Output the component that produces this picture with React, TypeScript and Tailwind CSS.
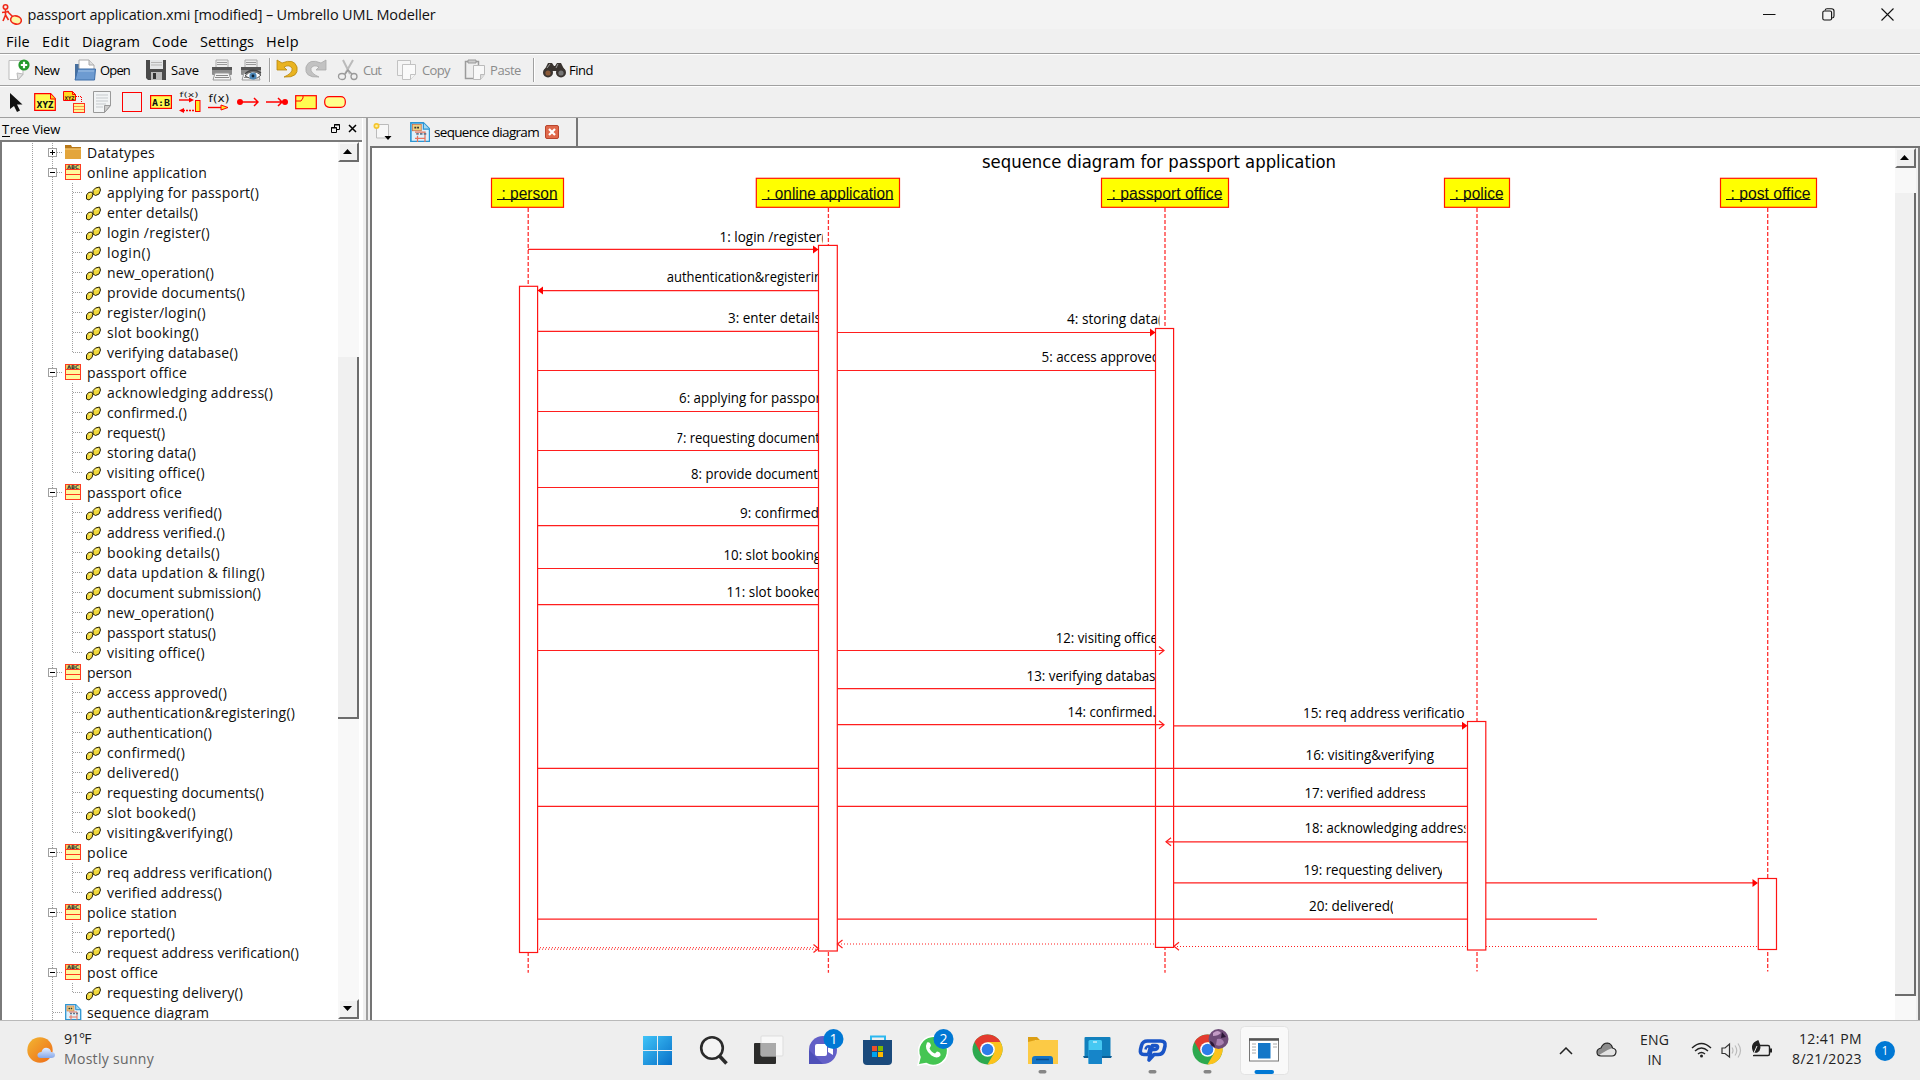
import React, { useLayoutEffect, useRef } from "react";

/* Text spread over a given width by letter spacing. */
function Fit({ w, children, className = "" }: { w: number; children: string; className?: string }) {
  const ref = useRef<HTMLSpanElement>(null);
  useLayoutEffect(() => {
    const el = ref.current;
    if (!el) return;
    el.style.letterSpacing = "0px";
    const natural = el.getBoundingClientRect().width;
    el.style.letterSpacing = `${(w - natural) / children.length}px`;
  }, [w, children]);
  return (
    <span ref={ref} className={`inline-block shrink-0 whitespace-pre ${className}`}>
      {children}
    </span>
  );
}

/* ---------- title bar and menus ---------- */

function TitleBar() {
  return (
    <div className="flex h-[29px] shrink-0 items-center bg-[#f3f3f3] pl-[2px] text-[14.5px] text-[#111]">
      <svg width="20" height="21" viewBox="0 0 20 21" fill="none" stroke="#f02818" strokeWidth="1.6">
        <circle cx="3.5" cy="3" r="2.2" />
        <path d="M3.5 5v7M0 8.5l7-1M3.5 11L1 17M3.5 11l3 5M5 7l8 8" />
        <ellipse cx="14" cy="16" rx="5.4" ry="4" fill="#fdf8a8" transform="rotate(15 14 16)" />
      </svg>
      <Fit w={408} className="ml-[5.5px]">passport application.xmi [modified] – Umbrello UML Modeller</Fit>
      <div className="ml-auto flex items-center gap-[46px] pb-[1px] pr-[26px]">
        <svg width="13" height="13" viewBox="0 0 13 13" stroke="#111"><path d="M0 6.5h12.5" /></svg>
        <svg width="13" height="13" viewBox="0 0 13 13" fill="none" stroke="#111" strokeWidth="1.1">
          <rect x=".8" y="3" width="8.8" height="9" rx="1.5" /><path d="M3 2.5Q3.3.8 5 .8h4.5Q12 .8 12 3v5q0 1.6-1.8 2" />
        </svg>
        <svg width="13" height="13" viewBox="0 0 13 13" stroke="#111" strokeWidth="1.1"><path d="M.5.5l12 12M12.5.5l-12 12" /></svg>
      </div>
    </div>
  );
}

function MenuBar() {
  return (
    <div className="flex h-[25px] shrink-0 items-center border-b border-[#a0a0a0] bg-[#f0f0f0] pl-[6px] pt-[2px] text-[14.5px] text-black">
      <div className="flex gap-[12px]">
        <Fit w={24}>File</Fit>
        <Fit w={28}>Edit</Fit>
        <Fit w={58}>Diagram</Fit>
        <Fit w={36}>Code</Fit>
        <Fit w={54}>Settings</Fit>
        <Fit w={33}>Help</Fit>
      </div>
    </div>
  );
}

/* ---------- main toolbar ---------- */

function Printer({ eye = false }: { eye?: boolean }) {
  return (
    <svg width="22" height="22" viewBox="0 0 22 22">
      <path d="M5 1h12v8H5z" fill="#eee" stroke="#aaa" />
      <path d="M6 3.5h10M6 5.5h10" stroke="#999" />
      <rect x="1" y="8" width="20" height="8" rx="1" fill="#8d8d8d" />
      <rect x="1" y="8" width="20" height="3" fill="#555" />
      <path d="M4 14h14l2 7H2z" fill="#f3f3f3" stroke="#999" />
      <path d="M5 16.5h12M4 18.5h14" stroke="#888" />
      {eye && (
        <>
          <path d="M5 17Q12 9 21 16Q15 23 5 17z" fill="#fff" stroke="#555" />
          <circle cx="13" cy="17" r="3.6" fill="#4b87b8" /><circle cx="13" cy="17" r="1.4" fill="#123" />
          <path d="M5 15Q12 8 21 14" fill="none" stroke="#444" strokeWidth="1.4" />
        </>
      )}
    </svg>
  );
}

function MainToolbar() {
  return (
    <div className="flex h-[32px] shrink-0 items-center border-b border-t border-b-[#a0a0a0] border-t-white bg-[#f0f0f0] pl-[8px] text-[13px] text-black">
      <svg width="22" height="22" viewBox="0 0 22 22">
        <path d="M1 1.5h14v14l-5 5H1z" fill="#fff" stroke="#bbb" /><path d="M15 15l-6-1 1 7z" fill="#e2e2e2" stroke="#bbb" />
        <circle cx="16" cy="6" r="5.6" fill="#22992b" /><path d="M16 2.8v6.4M12.8 6h6.400" stroke="#fff" strokeWidth="2.2" />
      </svg>
      <Fit w={25} className="ml-[4px] mt-[2px]">New</Fit>
      <svg width="22" height="22" viewBox="0 0 22 22" className="ml-[15px]">
        <path d="M1 5h8v15H1z" fill="#47709f" /><path d="M5 1h10l5 5v8H5z" fill="#fff" stroke="#aaa" /><path d="M15 1v5h5" fill="#ddd" stroke="#aaa" />
        <path d="M4 10h17.5l-1 11H1z" fill="#6d9bd1" stroke="#3f6ea9" /><path d="M4 12h16" stroke="#a2c2e6" />
      </svg>
      <Fit w={30} className="ml-[4px] mt-[2px]">Open</Fit>
      <svg width="22" height="22" viewBox="0 0 22 22" className="ml-[15px]">
        <path d="M1 1h20v20H3l-2-2z" fill="#4a4a4a" /><path d="M5 1h13v9H5z" fill="#e4e6e8" /><path d="M6 3.5h11M6 6h11" stroke="#b5b5b5" />
        <path d="M6 13h11v8H6z" fill="#bbb" /><path d="M8 14h3v6H8z" fill="#333" />
      </svg>
      <Fit w={28} className="ml-[4px] mt-[2px]">Save</Fit>
      <div className="ml-[12px] flex gap-[7px]"><Printer /><Printer eye /></div>
      <div className="ml-[7px] h-[24px] w-[2px] border-l border-r border-l-[#a0a0a0] border-r-white" />
      <svg width="22" height="20" viewBox="0 0 22 20" className="mb-[3px] ml-[5px]">
        <path d="M1 1v10h10L8 8q6-3 8 1.500Q17 14 8 18q15 1 13-10Q18-1 6 4z" fill="#e9b320" stroke="#b8860b" strokeWidth=".8" />
      </svg>
      <svg width="22" height="20" viewBox="0 0 22 20" className="mb-[3px] ml-[7px]">
        <path d="M21 1v10H11l3-3Q8 5 6 9.500Q5 14 14 18Q-1 19 1 8Q4-1 16 4z" fill="#c2c2c2" stroke="#aaa" strokeWidth=".8" />
      </svg>
      <svg width="22" height="22" viewBox="0 0 22 22" className="ml-[10px]" fill="none" stroke="#9a9a9a" strokeWidth="1.3">
        <path d="M6 1l7 14M16 1L8 15" stroke="#bbb" strokeWidth="2" /><ellipse cx="5" cy="17.500" rx="3.500" ry="3" /><ellipse cx="17" cy="17.500" rx="3" ry="3" /><path d="M8 15l3-4 4 4" />
      </svg>
      <Fit w={18} className="ml-[4px] mt-[2px] text-[#8b8b8b]">Cut</Fit>
      <svg width="22" height="22" viewBox="0 0 22 22" className="ml-[15px]" fill="#f5f5f5" stroke="#c2c2c2">
        <path d="M1.500 1.500h13v15h-13z" /><path d="M6.500 5.500h13v10l-5 5h-8z" fill="#fafafa" /><path d="M19.500 15.500h-5v5" />
      </svg>
      <Fit w={28} className="ml-[4px] mt-[2px] text-[#8b8b8b]">Copy</Fit>
      <svg width="22" height="22" viewBox="0 0 22 22" className="ml-[14px]">
        <path d="M1.500 2.500h13v17h-13z" fill="#eee" stroke="#9b9b9b" strokeWidth="1.500" /><path d="M4 1h8v3H4z" fill="#ccc" stroke="#999" />
        <path d="M9.500 6.500h11v9l-4 5h-7z" fill="#f8f8f8" stroke="#bbb" /><path d="M20.500 15.500h-4v5" fill="#ddd" stroke="#bbb" />
      </svg>
      <Fit w={31} className="ml-[4px] mt-[2px] text-[#8b8b8b]">Paste</Fit>
      <div className="ml-[12px] h-[24px] w-[2px] border-l border-r border-l-[#a0a0a0] border-r-white" />
      <svg width="23" height="16" viewBox="0 0 23 16" className="ml-[8px]" fill="#3a3430">
        <path d="M5 1h4l2 3h1l2-3h4l4 8H1z" /><circle cx="5" cy="10.500" r="5" /><circle cx="18" cy="10.500" r="5" />
        <circle cx="5" cy="11" r="2.600" fill="#8a5a38" /><circle cx="18" cy="11" r="2.600" fill="#777" /><path d="M7 2l-3 4M15 2l-2 4" stroke="#999" />
      </svg>
      <Fit w={24} className="ml-[3px] mt-[2px]">Find</Fit>
    </div>
  );
}

/* ---------- diagram tools ---------- */

function Tool({ children }: { children: React.ReactNode }) {
  return <svg width="22" height="22" viewBox="0 0 22 22" fill="none">{children}</svg>;
}

function ToolsBar() {
  return (
    <div className="flex h-[32px] shrink-0 items-center gap-[7px] border-b border-t border-b-[#a0a0a0] border-t-white bg-[#f0f0f0] pl-[5px]">
      <Tool><path d="M5 2v16l4-3 3 6 3-1.500-3-6h5.500z" fill="#111" /></Tool>
      <Tool>
        <path d="M.7 2.700h16l4.600 5v11.600H.7z" fill="#fffb50" stroke="red" strokeWidth="1.200" /><path d="M16.500 3v5h5" fill="#f7d020" stroke="red" />
        <text x="2.500" y="16.500" fontSize="9" fontWeight="700" fontFamily="DejaVu Sans" fill="#111" textLength="17" lengthAdjust="spacingAndGlyphs">XYZ</text>
      </Tool>
      <Tool>
        <path d="M.5.5h9l3 3v6H.5z" fill="#ffd820" stroke="red" /><path d="M9.500.5v3h3" stroke="red" />
        <text x="1.500" y="8.500" fontSize="5" fontWeight="700" fontFamily="DejaVu Sans" fill="#411" textLength="10" lengthAdjust="spacingAndGlyphs">XYZ</text>
        <path d="M13 5.500h5.500V12" stroke="red" strokeDasharray="1 1" /><rect x="10.500" y="12.500" width="11" height="9" fill="#fff690" stroke="#ff3020" /><path d="M11 15.500h10M11 18.500h10" stroke="#ff9050" />
      </Tool>
      <Tool>
        <path d="M1.500.5h17v14l-6 7h-11z" fill="#f2f4f5" stroke="#999" /><path d="M4 4h12M4 7h12M4 10h12M4 13h10M4 16h7" stroke="#c5c9cc" /><path d="M18.500 14.500h-6v7z" fill="#ccc" stroke="#999" />
      </Tool>
      <Tool><rect x="1.500" y="1.500" width="19" height="19" stroke="red" /></Tool>
      <Tool>
        <rect x=".6" y="4.600" width="20.800" height="12.800" fill="#fffb50" stroke="red" strokeWidth="1.200" />
        <text x="2" y="14.500" fontSize="9" fontWeight="700" fontFamily="DejaVu Sans Mono" fill="#111" textLength="18" lengthAdjust="spacingAndGlyphs">A:B</text>
      </Tool>
      <Tool>
        <text x=".5" y="6" fontSize="7" fontFamily="DejaVu Sans" fill="#222" textLength="19" lengthAdjust="spacingAndGlyphs">f(x)</text>
        <path d="M0 9h12" stroke="red" strokeWidth="1.400" /><path d="M10 6.500l5 2.500-5 2.500z" fill="red" /><rect x="16.500" y="9.500" width="4.500" height="11" fill="#ffe820" stroke="red" />
        <path d="M4 19.500h12" stroke="red" strokeWidth="1.600" strokeDasharray="2 1" /><path d="M5 17l-5 2.500 5 2.500z" fill="red" />
      </Tool>
      <Tool>
        <text x=".5" y="11" fontSize="11" fontFamily="DejaVu Sans" fill="#111" textLength="21" lengthAdjust="spacingAndGlyphs">f(x)</text>
        <path d="M0 16.500h13" stroke="red" strokeWidth="1.400" /><path d="M13 14l7 2.500-7 2.500z" fill="#ffe820" stroke="red" />
      </Tool>
      <Tool><circle cx="3" cy="11" r="3" fill="red" /><path d="M3 11h18M17 7l4 4-4 4" stroke="red" strokeWidth="1.500" /></Tool>
      <Tool><circle cx="19" cy="11" r="3" fill="red" /><path d="M0 11h17M12 7l4 4-4 4" stroke="red" strokeWidth="1.500" /></Tool>
      <Tool><rect x=".7" y="4.700" width="20.600" height="13" fill="#fffb50" stroke="red" strokeWidth="1.200" /><path d="M8 5v2l-2 3H1" stroke="red" /></Tool>
      <Tool><rect x=".7" y="5.700" width="20.600" height="10.600" rx="4.500" fill="#ffff8c" stroke="red" strokeWidth="1.200" /></Tool>
    </div>
  );
}

/* ---------- tree view ---------- */

type Node = { label: string; w: number; kind: "folder" | "class" | "diagram"; kids?: [string, number][] };

const tree: Node[] = [
  { label: "Datatypes", w: 68, kind: "folder" },
  {
    label: "online application", w: 120, kind: "class",
    kids: [["applying for passport()", 152], ["enter details()", 91], ["login /register()", 103], ["login()", 44], ["new_operation()", 107], ["provide documents()", 138], ["register/login()", 99], ["slot booking()", 92], ["verifying database()", 131]],
  },
  { label: "passport office", w: 100, kind: "class", kids: [["acknowledging address()", 166], ["confirmed.()", 80], ["request()", 58], ["storing data()", 89], ["visiting office()", 98]] },
  {
    label: "passport ofice", w: 95, kind: "class",
    kids: [["address verified()", 115], ["address verified.()", 118], ["booking details()", 113], ["data updation & filing()", 158], ["document submission()", 154], ["new_operation()", 107], ["passport status()", 109], ["visiting office()", 98]],
  },
  {
    label: "person", w: 45, kind: "class",
    kids: [["access approved()", 120], ["authentication&registering()", 188], ["authentication()", 105], ["confirmed()", 78], ["delivered()", 72], ["requesting documents()", 157], ["slot booked()", 89], ["visiting&verifying()", 126]],
  },
  { label: "police", w: 41, kind: "class", kids: [["req address verification()", 165], ["verified address()", 115]] },
  { label: "police station", w: 90, kind: "class", kids: [["reported()", 68], ["request address verification()", 192]] },
  { label: "post office", w: 71, kind: "class", kids: [["requesting delivery()", 136]] },
  { label: "sequence diagram", w: 122, kind: "diagram" },
];

function DiagramGlyph() {
  return (
    <>
      <path d="M.7.7h10l5 5v10H.7z" fill="#dff1fb" stroke="#2d95d2" strokeWidth="1.300" />
      <path d="M10.700.7v5h5" fill="#a6d8f2" stroke="#2d95d2" />
      <rect x="2" y="2" width="7" height="5" fill="#ecd080" stroke="#c96b45" strokeWidth=".6" />
      <path d="M3.500 4.500h4" stroke="#333" strokeWidth="1.500" strokeDasharray="1.500 .7" />
      <path d="M4 8h8v3M4 13h8M6 11v5M12 11v5" stroke="#e8755f" fill="none" />
      <path d="M5 9.500h8" stroke="#66758a" strokeWidth="1.500" strokeDasharray="2 1" />
    </>
  );
}

function NodeGlyph({ kind }: { kind: Node["kind"] }) {
  if (kind === "folder")
    return <g><path d="M0 1h6l1 2h9v11.500H0z" fill="#b87818" /><path d="M0 4.500h16V15H0z" fill="#e3a53b" /><path d="M0 5h16" stroke="#f5cc7c" /></g>;
  if (kind === "diagram") return <g><DiagramGlyph /></g>;
  return (
    <g>
      <rect x=".5" y=".5" width="15" height="15" fill="#fffa9c" stroke="#ff3c20" />
      <rect x="1" y="1" width="14" height="4" fill="#e4d36a" />
      <text x="2" y="4.800" fontSize="5" fontWeight="700" fontFamily="DejaVu Sans" fill="#333" textLength="12" lengthAdjust="spacingAndGlyphs">ABC</text>
      <path d="M.5 5.500h15M.5 10.500h15" stroke="#ff3c20" />
    </g>
  );
}

const dot = { stroke: "#a0a0a0", strokeDasharray: "1 1", fill: "none" };

function ParentRow({ node }: { node: Node }) {
  return (
    <div className="flex h-[20px] shrink-0 items-center">
      <svg width="85" height="20" viewBox="0 0 85 20" className="shrink-0">
        <path d="M30.500 0v20M50.500 0v20" {...dot} />
        <path d={node.kind === "diagram" ? "M51 9.500h10" : "M55 9.500h6"} {...dot} />
        {node.kind !== "diagram" && (
          <>
            <rect x="46.500" y="5.500" width="8" height="8" fill="#fff" stroke="#a0a0a0" />
            <path d={node.kind === "folder" ? "M48 9.500h5M50.500 7v5" : "M48 9.500h5"} stroke="#000" />
          </>
        )}
        <g transform="translate(63 1)"><NodeGlyph kind={node.kind} /></g>
      </svg>
      <Fit w={node.w} className="mb-[2px]">{node.label}</Fit>
    </div>
  );
}

function ChildRow({ label, w, last }: { label: string; w: number; last: boolean }) {
  return (
    <div className="flex h-[20px] shrink-0 items-center">
      <svg width="105" height="20" viewBox="0 0 105 20" className="shrink-0">
        <path d="M30.500 0v20M50.500 0v20" {...dot} />
        <path d={last ? "M70.500 0v9.500h10" : "M70.500 0v20M71 9.500h10"} {...dot} />
        <g fill="#f0d83c" stroke="#2a2408" strokeWidth="1">
          <path d="M84.500 12l2-2.500 3-.5 1.500 2-1 3.500-3 2.500-2.500-1z" />
          <path d="M91 7.500l2.500-2.500 4-1 1 3-1.500 4-3.500 1.500-2.500-1.500z" />
        </g>
        <path d="M87 11.500l2-1M93.500 7l3-1" stroke="#fffbb0" />
      </svg>
      <Fit w={w} className="mb-[2px]">{label}</Fit>
    </div>
  );
}

function ArrowButton({ down = false }: { down?: boolean }) {
  return (
    <div className="flex h-[20px] w-[21px] shrink-0 items-center justify-center border-2 border-b-[#6c6c6c] border-l-[#f8f8f8] border-r-[#6c6c6c] border-t-[#f8f8f8] bg-[#f0f0f0] pb-[1px] pr-[2px]">
      <svg width="9" height="5" viewBox="0 0 9 5"><path d={down ? "M0 0h9L4.500 5z" : "M0 5h9L4.500 0z"} fill="#000" /></svg>
    </div>
  );
}

function TreePanel() {
  return (
    <div className="flex w-[362px] shrink-0 flex-col">
      <div className="flex h-[22px] shrink-0 items-center bg-[#f0f0f0] pl-[2px] pt-[1px] text-[13px]">
        <span className="inline-flex items-center"><Fit w={8} className="underline underline-offset-2">T</Fit><Fit w={50}>ree View</Fit></span>
        <div className="ml-auto flex items-center gap-[8px] pb-[3px] pr-[5px]">
          <svg width="9" height="9" viewBox="0 0 9 9" fill="none" stroke="#000"><path d="M3.500 3V.5h5v5H6M3 1h6" /><path d="M.5 3.500h5v5h-5zM0 4h6" /></svg>
          <svg width="9" height="9" viewBox="0 0 9 9" stroke="#000" strokeWidth="1.500"><path d="M1 1l7 7M8 1L1 8" /></svg>
        </div>
      </div>
      <div className="flex min-h-0 flex-1 border-l-2 border-t-2 border-[#7a7a7a] bg-white">
        <div className="flex w-[336px] flex-col overflow-hidden pt-[1px] text-[14px] text-[#101010]">
          {tree.map((n) => (
            <React.Fragment key={n.label}>
              <ParentRow node={n} />
              {n.kids?.map(([label, w], i) => <ChildRow key={label} label={label} w={w} last={i === n.kids!.length - 1} />)}
            </React.Fragment>
          ))}
        </div>
        <div className="flex w-[21px] flex-col bg-[#f8f8f8] pb-[1px]">
          <ArrowButton />
          <div className="h-[195px]" />
          <div className="h-[362px] border-b-2 border-r-2 border-[#6c6c6c] bg-[#f0f0f0]" />
          <div className="flex-1" />
          <ArrowButton down />
        </div>
      </div>
    </div>
  );
}

/* ---------- sequence diagram ---------- */

const heads: [string, number, number, number][] = [
  // label, left, right, lifeline x
  [": person", 491.5, 563.5, 528.2],
  [": online application", 756.3, 899.5, 828.4],
  [": passport office", 1101.5, 1228.5, 1165],
  [": police", 1444.5, 1509.5, 1477],
  [": post office", 1720.5, 1816.5, 1767.7],
];

const activations: [number, number, number, number][] = [
  [519.5, 286.3, 537.6, 952.5],
  [818.5, 245.4, 837.3, 951],
  [1155.5, 328.5, 1173.6, 947.4],
  [1467.5, 721.5, 1485.8, 950],
  [1758.3, 878.5, 1776.5, 949.5],
];

// text, x, right end, baseline, visible range
const captions: [string, number, number, number, number, number][] = [
  ["1: login /register(", 719.5, 825.5, 241.5, 700, 822.7],
  ["authentication&registerin", 666.7, 822, 281.7, 660, 830],
  ["3: enter details", 728, 821, 322.7, 700, 830],
  ["4: storing data(", 1067, 1162, 323.7, 1000, 1159.5],
  ["5: access approved", 1041.5, 1160, 361.7, 1000, 1170],
  ["6: applying for passpor", 679, 821, 402.7, 600, 830],
  ["7: requesting document", 675.5, 820, 442.7, 677.5, 830],
  ["8: provide document", 691, 818, 478.7, 600, 830],
  ["9: confirmed", 740, 819, 517.7, 600, 830],
  ["10: slot booking", 723.5, 821, 559.7, 600, 830],
  ["11: slot booked", 726.5, 822, 596.7, 600, 830],
  ["12: visiting office", 1055.7, 1158, 642.7, 1000, 1170],
  ["13: verifying databas", 1026.5, 1155.5, 680.7, 1000, 1170],
  ["14: confirmed.", 1067.5, 1156, 716.7, 1000, 1170],
  ["15: req address verificatio", 1303, 1464.5, 717.7, 1300, 1466],
  ["16: visiting&verifying", 1305.5, 1434, 759.7, 1300, 1466],
  ["17: verified address", 1304.5, 1426, 797.7, 1300, 1425],
  ["18: acknowledging address", 1304.5, 1469.5, 832.7, 1300, 1465.5],
  ["19: requesting delivery", 1303.5, 1444, 874.7, 1300, 1442],
  ["20: delivered(", 1309, 1394, 910.7, 1300, 1393],
];

const lines: [number, number, number][] = [
  // y, from, to
  [249.4, 528, 813], [290.6, 543, 818], [331.4, 538, 818], [332.5, 837, 1150], [370.5, 538, 818], [370.5, 837, 1155],
  [411.5, 538, 818], [450.5, 538, 818], [487.5, 538, 818], [525.6, 538, 818], [568.5, 538, 818], [604.6, 538, 818],
  [650.5, 538, 818], [650.5, 837, 1164], [688.6, 837, 1155], [724.7, 837, 1164], [725.8, 1173, 1462],
  [768.4, 538, 818], [768.4, 837, 1467], [806.3, 538, 818], [806.3, 837, 1467], [841.8, 1166, 1467],
  [882.9, 1173, 1467], [882.9, 1486, 1753], [919.2, 538, 818], [919.2, 837, 1467], [919.2, 1486, 1597],
];

function Diagram() {
  return (
    <svg width="1523" height="872" viewBox="372 148 1523 872" className="shrink-0 bg-white">
      <text x="982" y="168" fontSize="18" fontFamily="DejaVu Sans Condensed, DejaVu Sans, sans-serif" textLength="354" lengthAdjust="spacingAndGlyphs">sequence diagram for passport application</text>
      {heads.map(([label, x1, x2, lx], i) => (
        <g key={label}>
          <path d={`M${lx} 208V${i > 2 ? 971.5 : 972.7}`} stroke="#ff3030" strokeWidth="1.300" strokeDasharray="4 2" />
          <rect x={x1} y="178.300" width={x2 - x1} height="29" fill="#ffff00" stroke="#ff1800" strokeWidth="1.200" />
          <text x={x1 + 10} y="199" fontSize="16" fontFamily="Liberation Sans" fill="#111" textLength={x2 - x1 - 16} lengthAdjust="spacingAndGlyphs">{label}</text>
          <path d={`M${x1 + 5.5} 199.500H${x2 - 6}`} stroke="#111" />
        </g>
      ))}
      {captions.map(([label, x1, x2, y, c1, c2], i) => (
        <g key={label}>
          <clipPath id={`caption${i}`}><rect x={c1} y={y - 16} width={c2 - c1} height="24" /></clipPath>
          <text clipPath={`url(#caption${i})`} x={x1} y={y} fontSize="14.500" fontFamily="Open Sans, sans-serif" fill="#000" textLength={x2 - x1} lengthAdjust="spacingAndGlyphs">{label}</text>
        </g>
      ))}
      {activations.map(([x1, y1, x2, y2]) => (
        <rect key={x1} x={x1} y={y1} width={x2 - x1} height={y2 - y1} fill="#fff" stroke="#ff1414" strokeWidth="1.200" />
      ))}
      <g stroke="#ff1e1e" strokeWidth="1.200" fill="none">
        {lines.map(([y, a, b]) => <path key={`${y}-${a}`} d={`M${a} ${y}H${b}`} />)}
        <path d="M1159 646.500l5 4-5 4M1159 720.700l5 4-5 4M1171 837.800l-5 4 5 4M813.500 944.500l5 4-5 4M842.500 940l-5 4 5 4M1179 942.300l-5 4 5 4" />
        <path d="M540 947.700H818M539 949.200H818" strokeDasharray="1 2" strokeWidth="1" />
        <path d="M838 944H1155" strokeDasharray="1 2" />
        <path d="M1174 946.500H1467M1486 946.500H1758" strokeDasharray="1 2" strokeWidth="1" />
      </g>
      <path d="M813 245.400l5.500 4-5.500 4zM543 286.600l-5.500 4 5.500 4zM1150 328.500l5.500 4-5.500 4zM1462 721.800l5.500 4-5.500 4zM1752.500 879l5.500 4-5.500 4z" fill="red" />
    </svg>
  );
}

function Workspace() {
  return (
    <div className="flex min-w-0 flex-1 flex-col bg-[#f0f0f0]">
      <div className="flex h-[28px] shrink-0 pl-[3px] text-[13.500px]">
        <svg width="20" height="20" viewBox="0 0 20 20" className="mt-[4px]">
          <path d="M3.500 2.500h12v13.500h-12z" fill="#f7f7f7" stroke="#bbb" /><circle cx="3.500" cy="4" r="3" fill="#f5c52e" /><circle cx="3.500" cy="4" r="1.300" fill="#fff2a0" />
          <path d="M11.500 14h7L15 18z" fill="#000" />
        </svg>
        <div className="ml-[9px] flex w-[176px] items-center border-r-2 border-[#777] pl-[8px]">
          <svg width="20" height="20" viewBox="0 0 16 16" className="mb-[1px]"><DiagramGlyph /></svg>
          <Fit w={105} className="ml-[4px]">sequence diagram</Fit>
          <svg width="14" height="14" viewBox="0 0 14 14" className="ml-[6px]"><rect x=".5" y=".5" width="13" height="13" rx="1.500" fill="#e0694b" stroke="#b9452d" /><path d="M4 4l6 6M10 4l-6 6" stroke="#fff" strokeWidth="2.200" /></svg>
        </div>
      </div>
      <div className="flex min-h-0 flex-1 overflow-hidden border-l-2 border-t-2 border-[#747474]">
        <Diagram />
        <div className="flex w-[21px] shrink-0 flex-col bg-[#f8f8f8]">
          <ArrowButton />
          <div className="h-[25px]" />
          <div className="h-[803px] border-b-2 border-r-2 border-[#6c6c6c] bg-[#f0f0f0]" />
        </div>
        <div className="ml-[2px] w-[2px] shrink-0 bg-[#808080]" />
      </div>
    </div>
  );
}

/* ---------- taskbar ---------- */

function TaskCell({ children, mark = false }: { children: React.ReactNode; mark?: boolean }) {
  return (
    <svg width="55" height="59" viewBox="0 0 55 59" className="shrink-0">
      {children}
      {mark && <rect x="23.500" y="49" width="8" height="3.500" rx="1.700" fill="#868686" />}
    </svg>
  );
}

function Chrome() {
  return (
    <g transform="translate(27.500 28.500)">
      <circle r="15" fill="#2da94f" />
      <path d="M-13-7.500A15 15 0 0 1 13-7.500L0-7-6.500 4z" fill="#e33b2e" />
      <path d="M13-7.500A15 15 0 0 1 0 15L6.500 3.700 0-7.500z" fill="#fcc31c" />
      <circle r="7.300" fill="#fff" /><circle r="5.800" fill="#2f7de9" />
    </g>
  );
}

function Badge({ n }: { n: string }) {
  return (
    <g>
      <circle cx="38.500" cy="18" r="10" fill="#0078d4" />
      <text x="38.500" y="22.800" fontSize="14" fontFamily="Open Sans" fill="#fff" textAnchor="middle">{n}</text>
    </g>
  );
}

function Taskbar() {
  return (
    <div className="flex h-[60px] shrink-0 border-t border-[#b9b9b9] bg-[#eeeeee] text-[14px] text-[#222]">
      <div className="flex w-[629.500px] shrink-0 items-center pl-[27px]">
        <svg width="29" height="28" viewBox="0 0 29 28" className="mb-[2px]">
          <defs>
            <linearGradient id="sun" x1="0" y1="0" x2="1" y2="1"><stop offset="0" stopColor="#f2b632" /><stop offset="1" stopColor="#ee6a18" /></linearGradient>
            <linearGradient id="cloud" x1="0" y1="0" x2="0" y2="1"><stop offset="0" stopColor="#e6efff" /><stop offset="1" stopColor="#86a8ea" /></linearGradient>
          </defs>
          <circle cx="13" cy="14" r="12.700" fill="url(#sun)" /><path d="M14 22q-4 0-3.500-3.500.7-2.500 4-2.500 1.500-5 6-4 3 .7 3.500 4 4 0 4 3t-4 3z" fill="url(#cloud)" />
        </svg>
        <div className="mb-[3px] ml-[8px] flex flex-col items-start">
          <Fit w={27} className="leading-[20px]">91°F</Fit>
          <Fit w={90} className="leading-[20px] text-[#666]">Mostly sunny</Fit>
        </div>
      </div>
      <div className="flex w-[661px] shrink-0 gap-[0.1px]">
        <TaskCell>
          <defs><linearGradient id="win" x1="0" y1="0" x2="1" y2="1"><stop offset="0" stopColor="#40c4f8" /><stop offset="1" stopColor="#0870c8" /></linearGradient></defs>
          <path d="M13 15h14v14H13zM28 15h14v14H28zM13 30h14v14H13zM28 30h14v14H28z" fill="url(#win)" />
        </TaskCell>
        <TaskCell><g fill="none" stroke="#2b2b2b" strokeWidth="2.600"><circle cx="27" cy="27" r="10.800" fill="#f5f5f5" /><path d="M34.500 35l7 7.500" strokeWidth="3.600" /></g></TaskCell>
        <TaskCell><rect x="14" y="22" width="22" height="21" rx="1" fill="#2c2c2b" /><rect x="21" y="15" width="22" height="20" rx="1" fill="#f8f8f8" stroke="#ddd" /><path d="M21 22h15v13H21z" fill="#aaa" /></TaskCell>
        <TaskCell>
          <circle cx="28" cy="29" r="14" fill="#625fc7" /><path d="M14 29v14h14z" fill="#4e50b8" /><rect x="20" y="23" width="12" height="12" rx="2" fill="#fff" /><path d="M33 27l5-3v10l-5-3z" fill="#fff" />
          <Badge n="1" />
        </TaskCell>
        <TaskCell>
          <path d="M21 20v-4.500h14V20" fill="none" stroke="#2cb8ef" strokeWidth="2" />
          <path d="M13 19h29v21q0 4-4 4H17q-4 0-4-4z" fill="#1a4a7c" /><path d="M22 25h5v5h-5z" fill="#f0502b" /><path d="M28 25h5v5h-5z" fill="#7eb900" /><path d="M22 31h5v5h-5z" fill="#00a4ef" /><path d="M28 31h5v5h-5z" fill="#ffb900" />
        </TaskCell>
        <TaskCell>
          <path d="M13 44l2-8A14.500 14.500 0 1 1 21 42.500z" fill="#45c552" stroke="#fff" strokeWidth="1.500" />
          <path d="M22 21.500q3-1 4 3l-1.500 3q2 4 5.500 5l2-2q4 .5 3.500 4-3 4-9 0-8-6-4.500-13z" fill="#fff" />
          <Badge n="2" />
        </TaskCell>
        <TaskCell><Chrome /></TaskCell>
        <TaskCell mark>
          <path d="M13 16h9l3 3h-5v5h-7z" fill="#dc9f15" /><path d="M13 21l8-2h22v24H13z" fill="#fcca45" /><path d="M17 43v-5q0-3 3-3h15q3 0 3 3v5z" fill="#1474c5" /><path d="M21 38.500h13" stroke="#0a4c88" strokeWidth="1.500" />
        </TaskCell>
        <TaskCell><rect x="14.500" y="16" width="26" height="20" rx="1" fill="#1180bd" /><path d="M13 35h29l-1 2H14z" fill="#0b5e96" /><rect x="18.500" y="19" width="13.500" height="24" rx="1.500" fill="#45c8f2" /><path d="M18.500 29H32v14H18.500z" fill="#1685c9" /><path d="M23 21h4" stroke="#fff" /></TaskCell>
        <TaskCell mark>
          <g fill="none" stroke="#1954c6" strokeWidth="3.600" strokeLinejoin="round">
            <path d="M23 33.500h-4q-4.500 0-3.500-5l1-4q1.200-4.500 6-4.500h13q5.500 0 4.500 5l-1 4q-1.200 4.500-6 4.500h-4l-5 5.500 1.500-8 2-6.500h3q2.500 0 2 2-.4 2-3 2h-2" />
            <path d="M23 33.500l2-8q-4-1-4.500 3" strokeWidth="2.600" />
          </g>
        </TaskCell>
        <TaskCell mark>
          <Chrome /><circle cx="38.500" cy="18" r="10" fill="#704d79" />
          <path d="M33 12q5-4 8 0-3 3-8 3z" fill="#c49cc6" /><path d="M37 18q6-1 7 4-3 4-8 2z" fill="#a880b0" /><path d="M30 20q4 1 5 6l-3-1q-2-2-2-5zM42 11l4 5-5 1z" fill="#2b1736" />
        </TaskCell>
        <TaskCell>
          <rect x="4.500" y="5.500" width="48" height="48" rx="4" fill="#f9f9f9" stroke="#e3e3e3" />
          <rect x="13.500" y="18" width="29" height="22" fill="#fff" stroke="#777" /><path d="M13 18.500h30" stroke="#555" strokeWidth="2.500" /><rect x="22" y="22" width="12.500" height="15.500" fill="#1477c8" /><path d="M16 23h4M16 26h4M16 29h4M16 32h4M37 23h4M37 26h4" stroke="#aaa" />
          <rect x="18.500" y="49" width="19.500" height="4" rx="2" fill="#0078d4" />
        </TaskCell>
      </div>
      <div className="ml-auto flex items-center pr-[25px]">
        <svg width="14" height="8" viewBox="0 0 14 8" fill="none" stroke="#222" strokeWidth="1.500"><path d="M1 7l6-6 6 6" /></svg>
        <svg width="21" height="15" viewBox="0 0 21 15" className="mb-[2px] ml-[23px]"><path d="M5 14q-4 0-4-4 0-3 4-4 2-5 6.500-5 4 .5 5 5 3.800 1 3.500 4-.5 4-4 4z" fill="#e4e4e4" /><path d="M1 10q0-3 4-4 2-5 6.500-5 4 .5 5 5l-5 2L3 13z" fill="#8c8c8c" /><path d="M5 14q-4 0-4-4 0-3 4-4 2-5 6.500-5 4 .5 5 5 3.800 1 3.500 4-.5 4-4 4z" fill="none" stroke="#222" strokeWidth="1.200" /></svg>
        <div className="mb-[2px] ml-[23px] flex w-[29px] flex-col items-center"><Fit w={29} className="leading-[20px]">ENG</Fit><Fit w={14} className="leading-[20px]">IN</Fit></div>
        <svg width="21" height="16" viewBox="0 0 21 16" className="mb-[1px] ml-[22px]" fill="none" stroke="#222" strokeWidth="1.400"><path d="M1 6q9.500-9 19 0M4 9q6.500-6 13 0M7 12q3.500-3 7 0" /><circle cx="10.500" cy="14" r="1.500" fill="#222" stroke="none" /></svg>
        <svg width="21" height="17" viewBox="0 0 21 17" className="ml-[9px]" fill="none" stroke="#333" strokeWidth="1.200"><path d="M1 6h3l4.500-4v13L4 11.500H1z" /><path d="M11 5.500q2 3 0 6M14 3.500q3.500 5 0 10M17 1.500q5 7 0 14" stroke="#bbb" /></svg>
        <svg width="21" height="18" viewBox="0 0 21 18" className="mb-[3px] ml-[9px]" fill="none" stroke="#222" strokeWidth="1.400"><path d="M9 5.500h8q1.500 0 1.500 1.500v7q0 1.500-1.500 1.500H2" /><path d="M20 8.500v4" strokeWidth="2" /><path d="M3 12Q-1 4 7 1q4 8-1 11z" fill="#222" /><path d="M2 15L6 6" stroke="#eee" strokeWidth="1" /></svg>
        <div className="mb-[3px] ml-[20px] flex w-[70px] flex-col items-end"><Fit w={63} className="leading-[20px]">12:41 PM</Fit><Fit w={70} className="leading-[20px]">8/21/2023</Fit></div>
        <div className="ml-[13px] flex h-[20px] w-[20px] items-center justify-center rounded-full bg-[#0078d4] text-[12px] text-white">1</div>
      </div>
    </div>
  );
}

export default function App() {
  return (
    <div className="flex h-[1080px] w-[1920px] flex-col overflow-hidden bg-[#f0f0f0] font-['Open_Sans',sans-serif]">
      <TitleBar />
      <MenuBar />
      <MainToolbar />
      <ToolsBar />
      <div className="flex min-h-0 flex-1">
        <TreePanel />
        <div className="flex w-[8px] shrink-0 border-l border-white"><div className="ml-[3px] w-[2px] bg-[#a0a0a0]" /></div>
        <Workspace />
      </div>
      <Taskbar />
    </div>
  );
}
